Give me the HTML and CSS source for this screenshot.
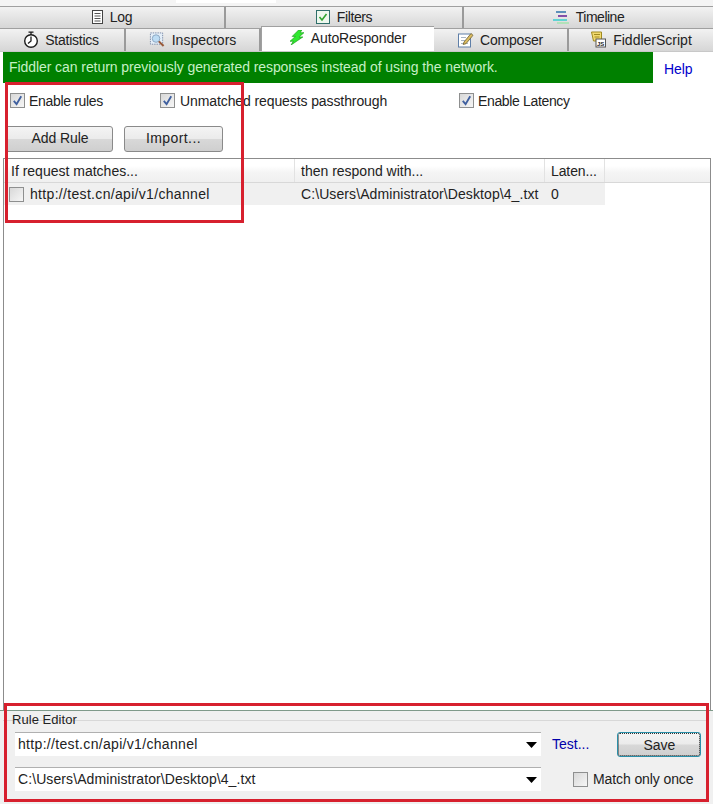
FILE: index.html
```html
<!DOCTYPE html>
<html lang="en">
<head>
<meta charset="utf-8">
<title>AutoResponder</title>
<link rel="stylesheet" href="styles.css">
</head>
<body>
<div class="app">
  <div class="topstrip"><span class="topwhite"></span></div>
  <div class="tabs row1">
    <div class="tab w225"><svg class="ic i-log" viewBox="0 0 11 14"><rect x=".5" y=".5" width="10" height="13" fill="#fff" stroke="#444"/><path d="M2.500 3.500h6M2.500 6h6M2.500 8.500h6M2.500 11h6" stroke="#555"/></svg><span class="t-log">Log</span></div>
    <div class="tab w238"><svg class="ic i-fil" viewBox="0 0 14 14"><rect x=".5" y=".5" width="13" height="13" fill="#eef8ee" stroke="#2f6f6a"/><path d="M3.500 7l2.500 3 4.500-6" fill="none" stroke="#2fa52f" stroke-width="1.600"/></svg><span class="t-fil">Filters</span></div>
    <div class="tab grow"><svg class="ic i-tim" viewBox="0 0 16 13"><path d="M3 1h10" stroke="#3a7ab0" stroke-width="1.600"/><path d="M5 5h9" stroke="#6a2a9a" stroke-width="1.600"/><path d="M0 9h14" stroke="#40d0d0" stroke-width="1.600"/><path d="M4 12h12" stroke="#a8e4b0" stroke-width="1.600"/></svg><span class="t-tim">Timeline</span></div>
  </div>
  <div class="tabs row2">
    <div class="tab w125"><svg class="ic big" viewBox="0 0 16 17"><circle cx="8" cy="10" r="6.300" fill="#fff" stroke="#1c1c1c" stroke-width="1.400"/><path d="M5.500 1.200h5M8 1.500v2.500M8 5.500V10l-3 2.500" stroke="#1c1c1c" stroke-width="1.300" fill="none"/></svg><span class="t-sta">Statistics</span></div>
    <div class="tab w135"><svg class="ic big" viewBox="0 0 17 17"><rect x="1.500" y="1.500" width="13" height="12" fill="#e4eef8" stroke="#7a8aa8" stroke-dasharray="1.500 1"/><circle cx="7.500" cy="7.500" r="4" fill="#bcdcf4" stroke="#8aa4c0"/><path d="M10.500 10.500l5 5" stroke="#9a5a3a" stroke-width="2.200"/></svg><span>Inspectors</span></div>
    <div class="tab active"><svg class="ic bolt" viewBox="0 0 13 14"><path d="M8 0L2 6h3L0 10.500h3L1 14l11-7.500H8.500L13 2.500H9.500L11 0z" fill="#2fe82f" stroke="#179a17" stroke-width=".6"/></svg><span class="t-aut">AutoResponder</span></div>
    <div class="tab w135"><svg class="ic big" viewBox="0 0 16 16"><rect x=".5" y="2.500" width="12" height="13" fill="#fff" stroke="#5f7fa8"/><path d="M3 6h5M3 9h4M3 12h7" stroke="#a8b4c4"/><path d="M6 10.500L13 2l2 1.800-7 8.400-2.800.8z" fill="#dcbc60" stroke="#6f5f30" stroke-width=".8"/></svg><span class="t-com">Composer</span></div>
    <div class="tab grow"><svg class="ic big" viewBox="0 0 16 16"><path d="M1.500 .5h10v9h-8z" fill="#f2da70" stroke="#a08a20"/><path d="M4 3h6M4.500 5.500h5" stroke="#a08a20"/><rect x="6" y="7.500" width="9.500" height="8" fill="#fff" stroke="#555"/><text x="7" y="14.300" class="js">JS</text></svg><span>FiddlerScript</span></div>
  </div>

  <div class="pane">
    <div class="bannerrow">
      <div class="banner">Fiddler can return previously generated responses instead of using the network.</div>
      <a class="help">Help</a>
    </div>
    <div class="opts">
      <label class="chk c1"><span class="box on"><svg viewBox="0 0 14 14"><path d="M3 7.500l3 3.500L11 2.500" fill="none" stroke="#3f5f9f" stroke-width="2"/></svg></span><span class="t-rules">Enable rules</span></label>
      <label class="chk c2"><span class="box on"><svg viewBox="0 0 14 14"><path d="M3 7.500l3 3.500L11 2.500" fill="none" stroke="#3f5f9f" stroke-width="2"/></svg></span><span class="t-unm">Unmatched requests passthrough</span></label>
      <label class="chk"><span class="box on"><svg viewBox="0 0 14 14"><path d="M3 7.500l3 3.500L11 2.500" fill="none" stroke="#3f5f9f" stroke-width="2"/></svg></span><span class="t-lat">Enable Latency</span></label>
    </div>
    <div class="btns">
      <button class="btn addrule">Add Rule</button>
      <button class="btn import">Import...</button>
    </div>
    <div class="list">
      <div class="lhead">
        <div class="col c-a">If request matches...</div>
        <div class="col c-b">then respond with...</div>
        <div class="col c-c">Laten...</div>
        <div class="col c-d"></div>
      </div>
      <div class="lrow">
        <div class="cell c-a"><span class="box"></span><span class="t-url">http://test.cn/api/v1/channel</span></div>
        <div class="cell c-b">C:\Users\Administrator\Desktop\4_.txt</div>
        <div class="cell c-c">0</div>
      </div>
    </div>
    <div class="editor">
      <div class="legend">Rule Editor</div>
      <div class="edrow r1">
        <div class="combo t-url">http://test.cn/api/v1/channel<svg class="caret" viewBox="0 0 11 6"><path d="M0 0h11L5.500 6z" fill="#000"/></svg></div>
        <a class="test">Test...</a>
        <button class="btn save">Save</button>
      </div>
      <div class="edrow r2">
        <div class="combo t-path">C:\Users\Administrator\Desktop\4_.txt<svg class="caret" viewBox="0 0 11 6"><path d="M0 0h11L5.500 6z" fill="#000"/></svg></div>
        <label class="chk once"><span class="box"></span><span class="t-once">Match only once</span></label>
      </div>
    </div>
  </div>
  <div class="redbox rb1"></div>
  <div class="redbox rb2"></div>
</div>
</body>
</html>
```
FILE: styles.css
```css
* { box-sizing: border-box; }
html, body { margin: 0; padding: 0; }
body { background: #fff; font-family: "Liberation Sans", Arial, sans-serif; font-size: 14px; color: #222; }
.app { position: relative; width: 713px; height: 804px; overflow: hidden; background: #f2f2f2; display: flex; flex-direction: column; }
.topstrip { height: 6px; background: #f4f4f4; flex: none; position: relative; }
.topwhite { display: block; margin-left: 176px; width: 100px; height: 3px; background: #fff; }
.tabs { display: flex; flex: none; }
.row1 { height: 22px; }
.row2 { height: 23px; }
.tab { display: flex; align-items: center; justify-content: center; gap: 7px; border-top: 1px solid #a0a0a0; border-right: 2px solid #9a9a9a; background: linear-gradient(#f2f2f2, #d6d6d6); color: #222; }
.row1 .tab { padding-bottom: 1px; }
.row2 .tab { padding-bottom: 1px; }
.w225 { width: 226px; }
.w238 { width: 238px; }
.w125 { width: 126px; padding-right: 2px; gap: 6px; }
.w135 { width: 135px; }
.grow { flex: 1; border-right: none; }
.tab.active { width: 173px; height: 25px; margin-top: -2px; background: #fff; border-right: none; border-left: 1px solid #a0a0a0; border-top: 1px solid #a0a0a0; padding-bottom: 3px; position: relative; }
.ic { flex: none; }
.i-log { width: 11px; height: 14px; }
.i-fil { width: 14px; height: 14px; }
.i-tim { width: 16px; height: 13px; }
.bolt { width: 14px; height: 15px; }
.ic.big { width: 16px; height: 17px; }
.t-log { letter-spacing: -0.3px; }
.t-fil { letter-spacing: -0.4px; }
.t-tim { letter-spacing: -0.5px; }
.t-sta { letter-spacing: -0.25px; }
.t-aut { letter-spacing: -0.15px; }
.t-com { letter-spacing: -0.2px; margin-left: -1px; }
.js { font: bold 6px "Liberation Sans", sans-serif; fill: #222; }
.pane { flex: 1; display: flex; flex-direction: column; background: #fff; border-top: 1px solid #c8c8c8; min-height: 0; }
.bannerrow { display: flex; height: 31px; flex: none; align-items: stretch; }
.banner { margin-left: 3px; width: 650px; background: #008000; color: #c6f0c6; padding-left: 6px; line-height: 30px; letter-spacing: -0.07px; white-space: nowrap; }
.help { color: #0000cc; margin-left: 11px; line-height: 34px; letter-spacing: -0.1px; }
.opts { display: flex; align-items: center; height: 35px; padding-left: 10px; flex: none; }
.chk { display: flex; align-items: center; gap: 5px; white-space: nowrap; }
.t-rules { letter-spacing: -0.33px; margin-left: -1px; }
.t-unm { letter-spacing: -0.1px; }
.t-lat { letter-spacing: -0.35px; margin-left: -1px; }
.t-url { letter-spacing: 0.32px; }
.t-path { letter-spacing: 0.09px; }
.t-once { letter-spacing: -0.1px; }
.c1 { width: 150px; }
.c2 { width: 299px; }
.box { width: 15px; height: 15px; flex: none; border: 1px solid #8e8f8f; background: linear-gradient(135deg, #d8d8d8, #f6f6f6); display: block; }
.box svg { display: block; width: 13px; height: 13px; }
.btns { display: flex; gap: 11px; padding-left: 5px; height: 26px; margin-top: 8px; flex: none; }
.btn { font: inherit; color: #222; border: 1px solid #8a8a8a; border-radius: 3px; background: linear-gradient(#f4f4f4 0%, #ebebeb 48%, #d8d8d8 52%, #cfcfcf 100%); padding: 0 0 2px; }
.addrule { width: 108px; letter-spacing: -0.1px; padding-left: 2px; }
.import { width: 99px; letter-spacing: 0.4px; }
.list { flex: 1; margin: 6px 2px 0 3px; border: 1px solid #8c8c8c; border-bottom: none; background: #fff; min-height: 0; position: relative; }
.lhead { display: flex; height: 24px; background: linear-gradient(#fff 30%, #f4f4f4 60%, #f0f0f0); border-bottom: 1px solid #d8d8d8; }
.col { line-height: 25px; padding-left: 7px; border-right: 1px solid #e2e2e2; white-space: nowrap; }
.c-a { width: 291px; }
.col.c-b { width: 250px; padding-left: 6px; }
.col.c-c { width: 60px; padding-left: 6px; letter-spacing: -0.1px; }
.c-d { flex: 1; border-right: none; }
.lrow { display: flex; width: 601px; height: 22px; background: #f0f0f0; align-items: center; }
.cell { white-space: nowrap; }
.cell.c-a { display: flex; align-items: center; gap: 6px; padding-left: 5px; }
.cell.c-b { width: 250px; padding-left: 6px; letter-spacing: 0.09px; }
.cell.c-c { width: 60px; padding-left: 6px; }
.editor { height: 94px; flex: none; background: #f0f0f0; border-top: 1px solid #7f9a8a; padding: 0 12px 0 15px; position: relative; }
.legend { position: absolute; left: 12px; top: 1px; font-size: 13px; letter-spacing: 0.05px; }
.editor::before { content: ""; position: absolute; left: 3px; right: 5px; top: 9px; height: 1px; background: #d8d8d8; }
.edrow { display: flex; align-items: center; }
.r1 { margin-top: 21px; height: 24px; }
.r2 { margin-top: 11px; height: 24px; }
.combo { width: 526px; height: 24px; flex: none; background: #fff; border-top: 1px solid #b0b0b0; line-height: 23px; padding-left: 3px; position: relative; white-space: nowrap; }
.caret { position: absolute; right: 4px; top: 9px; width: 11px; height: 6px; }
.test { color: #0000aa; margin-left: 11px; white-space: nowrap; }
.save { width: 84px; height: 25px; margin-left: 28px; margin-top: 1px; border: 1px solid #2a8fa8; outline: 1px dotted #333; outline-offset: -2px; flex: none; padding: 0; }
.once { margin-left: 32px; gap: 5px; }
.redbox { position: absolute; border: 3px solid #d7202e; pointer-events: none; }
.rb1 { left: 5px; top: 82px; width: 239px; height: 141px; }
.rb2 { left: 4px; top: 703px; width: 705px; height: 99px; }
```
